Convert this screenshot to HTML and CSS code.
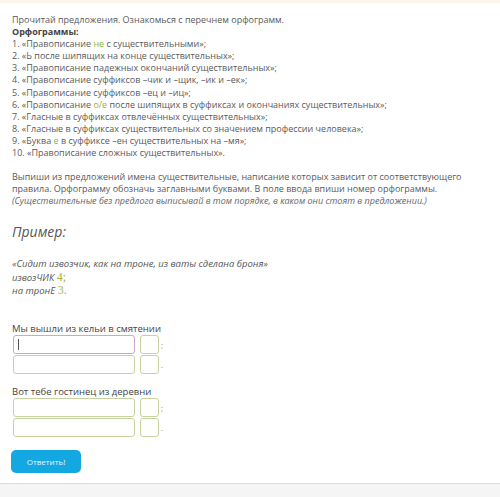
FILE: index.html
```html
<!DOCTYPE html>
<html lang="ru">
<head>
<meta charset="utf-8">
<link rel="stylesheet" href="styles.css">
</head>
<body>
<div class="strip"></div>
<main class="content">
  <p class="intro">Прочитай предложения. Ознакомься с перечнем орфограмм.<br>
  <b class="bold">Орфограммы:</b><br>
  1. «Правописание <span class="hl-green">не</span> с существительными»;<br>
  2. «Ь после шипящих на конце существительных»;<br>
  3. «Правописание падежных окончаний существительных»;<br>
  4. «Правописание суффиксов –чик и –щик, –ик и –ек»;<br>
  5. «Правописание суффиксов –ец и –иц»;<br>
  6. «Правописание <span class="hl-olive">о/е</span> после шипящих в суффиксах и окончаниях существительных»;<br>
  7. «Гласные в суффиксах отвлечённых существительных»;<br>
  8. «Гласные в суффиксах существительных со значением профессии человека»;<br>
  9. «Буква <span class="hl-green">е</span> в суффиксе –ен существительных на –мя»;<br>
  10. «Правописание сложных существительных».</p>
  <p class="task">Выпиши из предложений имена существительные, написание которых зависит от соответствующего<br>
  правила. Орфограмму обозначь заглавными буквами. В поле ввода впиши номер орфограммы.<br>
  <i>(Существительные без предлога выписывай в том порядке, в каком они стоят в предложении.)</i></p>
  <h2 class="example-title">Пример:</h2>
  <p class="example">«Сидит извозчик, как на троне, из ваты сделана броня»<br>
  извозЧИК <span class="num">4;</span><br>
  на тронЕ <span class="num">3.</span></p>

  <section class="group">
    <div class="label">Мы вышли из кельи в смятении</div>
    <div class="row">
      <div class="field big focused"><span class="caret"></span></div>
      <div class="field small"></div>
      <span class="punct">;</span>
    </div>
    <div class="row">
      <div class="field big"></div>
      <div class="field small"></div>
      <span class="punct">.</span>
    </div>
  </section>

  <section class="group second">
    <div class="label">Вот тебе гостинец из деревни</div>
    <div class="row">
      <div class="field big"></div>
      <div class="field small"></div>
      <span class="punct">;</span>
    </div>
    <div class="row">
      <div class="field big"></div>
      <div class="field small"></div>
      <span class="punct">.</span>
    </div>
  </section>

  <button class="submit">Ответить!</button>
</main>
<footer class="footer"></footer>
</body>
</html>
```

FILE: styles.css
```css
html, body {
  margin: 0;
  padding: 0;
  background: #fff;
}
body {
  width: 500px;
  height: 497px;
  overflow: hidden;
  display: flex;
  flex-direction: column;
  font-family: "Open Sans", "Noto Sans", sans-serif;
  color: #5a5a5a;
  font-size: 9px;
  line-height: 12.1px;
}
.strip {
  height: 3px;
  flex: none;
  background: #faf7e8;
}
.content {
  flex: 1;
  min-height: 0;
  padding: 11px 6px 0 12px;
  white-space: nowrap;
}
p { margin: 0; }
.bold { color: #444; font-weight: 700; }
.hl-green { color: #8db534; }
.hl-olive { color: #b4a61c; }
.task { margin-top: 12px; }
.task i { color: #666; }
.example-title {
  margin: 14px 0 0 0;
  font-size: 14px;
  line-height: 22px;
  font-weight: 400;
  font-style: italic;
  color: #555;
}
.example {
  margin-top: 15px;
  font-style: italic;
  font-size: 9.5px;
  color: #555;
}
.num {
  font-family: "Liberation Serif", "DejaVu Serif", serif;
  font-style: normal;
  font-size: 12px;
  color: #a3b23d;
}
.group { margin-top: 26px; }
.group.second { margin-top: 11px; }
.label {
  font-size: 9.5px;
  color: #444;
  line-height: 12px;
}
.row {
  display: flex;
  align-items: center;
  margin-left: 1px;
  height: 20px;
}
.field {
  box-sizing: border-box;
  height: 19px;
  border: 1px solid #c6d3a0;
  border-radius: 3px;
  background: #fff;
  position: relative;
}
.field.big { width: 122px; }
.field.small { width: 19px; margin-left: 5px; }
.field.focused { border-color: #cfa6c8; }
.caret {
  position: absolute;
  left: 4px;
  top: 3px;
  width: 1px;
  height: 11px;
  background: #555;
}
.punct {
  margin-left: 2px;
  font-size: 8px;
  color: #888;
}
.submit {
  display: block;
  margin-top: 12px;
  margin-left: -1px;
  width: 70px;
  height: 23px;
  border: none;
  border-radius: 5px;
  background: #14a8e3;
  color: #e8f6fd;
  font-family: "Open Sans", "Noto Sans", sans-serif;
  font-size: 8px;
  padding: 0;
}
.footer {
  flex: none;
  height: 13px;
  border-top: 1px solid #dcdcdc;
  background: #f5f5f5;
}
```
